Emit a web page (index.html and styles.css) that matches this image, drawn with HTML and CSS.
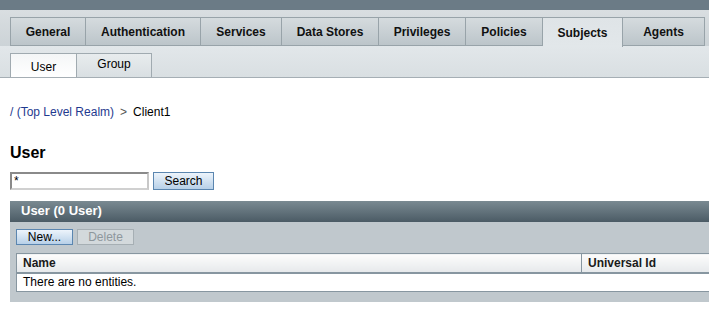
FILE: index.html
```html
<!DOCTYPE html>
<html lang="en">
	<head>
		<meta charset="UTF-8">
		<title>Subjects - User</title>
		<link rel="stylesheet" href="styles.css">
	</head>
	<body>
		<div class="masthead"></div>
		<ul class="tabs">
			<li class="tab t-general"><a href="#">General</a></li>
			<li class="tab t-auth"><a href="#">Authentication</a></li>
			<li class="tab t-services"><a href="#">Services</a></li>
			<li class="tab t-stores"><a href="#">Data Stores</a></li>
			<li class="tab t-priv"><a href="#">Privileges</a></li>
			<li class="tab t-policies"><a href="#">Policies</a></li>
			<li class="tab t-subjects active"><a href="#">Subjects</a></li>
			<li class="tab t-agents"><a href="#">Agents</a></li>
		</ul>
		<ul class="subtabs">
			<li class="subtab t-user active"><a href="#">User</a></li>
			<li class="subtab t-group"><a href="#">Group</a></li>
		</ul>

		<div class="content">
			<p class="crumbs"><a href="#">/ (Top Level Realm)</a><span class="sep">&gt;</span>Client1</p>
			<h1 class="title">User</h1>
			<form class="search">
				<input type="text" class="search-input" value="*">
				<button type="button" class="btn btn-blue search-btn">Search</button>
			</form>

			<div class="panel">
				<div class="panel-head">User (0 User)</div>
				<div class="panel-body">
					<div class="toolbar">
						<button type="button" class="btn btn-blue new-btn">New...</button>
						<button type="button" class="btn btn-off del-btn">Delete</button>
					</div>
					<table class="grid">
						<tr>
							<th class="col-name">Name</th>
							<th>Universal Id</th>
						</tr>
						<tr>
							<td colspan="2">There are no entities.</td>
						</tr>
					</table>
				</div>
			</div>
		</div>
	</body>
</html>
```

FILE: styles.css
```css
*{
	margin: 0;
	padding: 0;
	box-sizing: border-box;
}
body{
	font-family: "Liberation Sans", Arial, sans-serif;
	font-size: 12px;
	color: #000;
	background: #fff;
}
a{
	text-decoration: none;
	color: inherit;
}
ul{
	list-style: none;
}

.masthead{
	height: 10px;
	background: #6b7b86;
}

/* main tabs */
.tabs{
	display: flex;
	height: 36px;
	padding: 7px 0 0 10px;
	background: linear-gradient(#d9dee1, #ccd3d7);
}
.tab{
	height: 29px;
	border: 1px solid #98a3a9;
	border-left: none;
	background: linear-gradient(#d5dbde, #bcc5ca);
	font-weight: bold;
	font-size: 12px;
	text-align: center;
	line-height: 28px;
	color: #111;
}
.tab:first-child{
	border-left: 1px solid #98a3a9;
}
.tab a{
	display: block;
}
.tab.active{
	height: 30px;
	border-bottom: none;
	background: linear-gradient(#dfe4e7, #e2e7ea);
	line-height: 31px;
}
.t-general{ width: 76px; }
.t-auth{ width: 115px; }
.t-services{ width: 81px; }
.t-stores{ width: 97px; }
.t-priv{ width: 87px; }
.t-policies{ width: 77px; }
.t-subjects{ width: 80px; }
.t-agents{ width: 82px; }

/* sub tabs */
.subtabs{
	display: flex;
	height: 32px;
	padding: 7px 0 0 10px;
	background: linear-gradient(#e2e7ea, #d9dfe2);
	border-bottom: 1px solid #a5aeb4;
}
.subtab{
	height: 24px;
	border: 1px solid #a0aab0;
	border-left: none;
	border-bottom: none;
	background: linear-gradient(#e8ecee, #d9dfe2);
	text-align: center;
	line-height: 20px;
	font-size: 12px;
}
.subtab:first-child{
	border-left: 1px solid #a0aab0;
}
.subtab.active{
	background: linear-gradient(#f4f6f7, #ffffff);
	line-height: 26px;
}
.t-user{ width: 67px; }
.t-group{ width: 75px; }

/* page body */
.content{
	padding: 27px 0 0 10px;
}
.crumbs{
	line-height: 14px;
	font-size: 12px;
}
.crumbs a{
	color: #1f3a8f;
}
.crumbs .sep{
	color: #555;
	margin: 0 6px;
}
.title{
	margin-top: 24px;
	font-size: 16px;
	line-height: 19px;
	font-weight: bold;
}
.search{
	display: flex;
	gap: 4px;
	margin-top: 10px;
	height: 18px;
}
.search-input{
	width: 139px;
	height: 18px;
	border: 2px solid #8a8a8a;
	border-right-color: #c8c8c8;
	border-bottom-color: #d0d0d0;
	font-family: inherit;
	font-size: 12px;
	padding: 0 2px;
	line-height: 14px;
}
.btn{
	font-family: inherit;
	font-size: 12px;
	height: 18px;
	line-height: 14px;
	padding: 0;
}
.btn-blue{
	background: linear-gradient(#edf4fb, #b7d0e8);
	border: 1px solid #5b86b0;
	color: #000;
}
.btn-off{
	background: #d3d9dc;
	border: 1px solid #a6afb4;
	color: #8e979c;
}
.search-btn{
	width: 61px;
}

/* list panel */
.panel{
	margin-top: 11px;
	background: #c0c8cd;
	padding-bottom: 10px;
}
.panel-head{
	height: 21px;
	line-height: 20px;
	padding-left: 11px;
	font-size: 13px;
	font-weight: bold;
	color: #fff;
	background: linear-gradient(#7a8a92, #4b5b65);
}
.panel-body{
	padding: 7px 0 0 6px;
}
.toolbar{
	display: flex;
	gap: 4px;
	height: 16px;
}
.toolbar .btn{
	height: 16px;
	line-height: 12px;
}
.new-btn{
	width: 57px;
}
.del-btn{
	width: 57px;
}
.grid{
	margin-top: 8px;
	width: 700px;
	border-collapse: collapse;
	border: 1px solid #8796a0;
	background: #fff;
}
.grid th{
	height: 19px;
	text-align: left;
	font-weight: bold;
	font-size: 12px;
	padding: 0 6px;
	background: linear-gradient(#fcfcfc, #e6e9eb);
	border-bottom: 2px solid #8796a0;
	color: #1a1a1a;
}
.grid th.col-name{
	width: 565px;
	border-right: 1px solid #8796a0;
}
.grid td{
	height: 19px;
	padding: 0 6px;
	font-size: 12px;
}
```
